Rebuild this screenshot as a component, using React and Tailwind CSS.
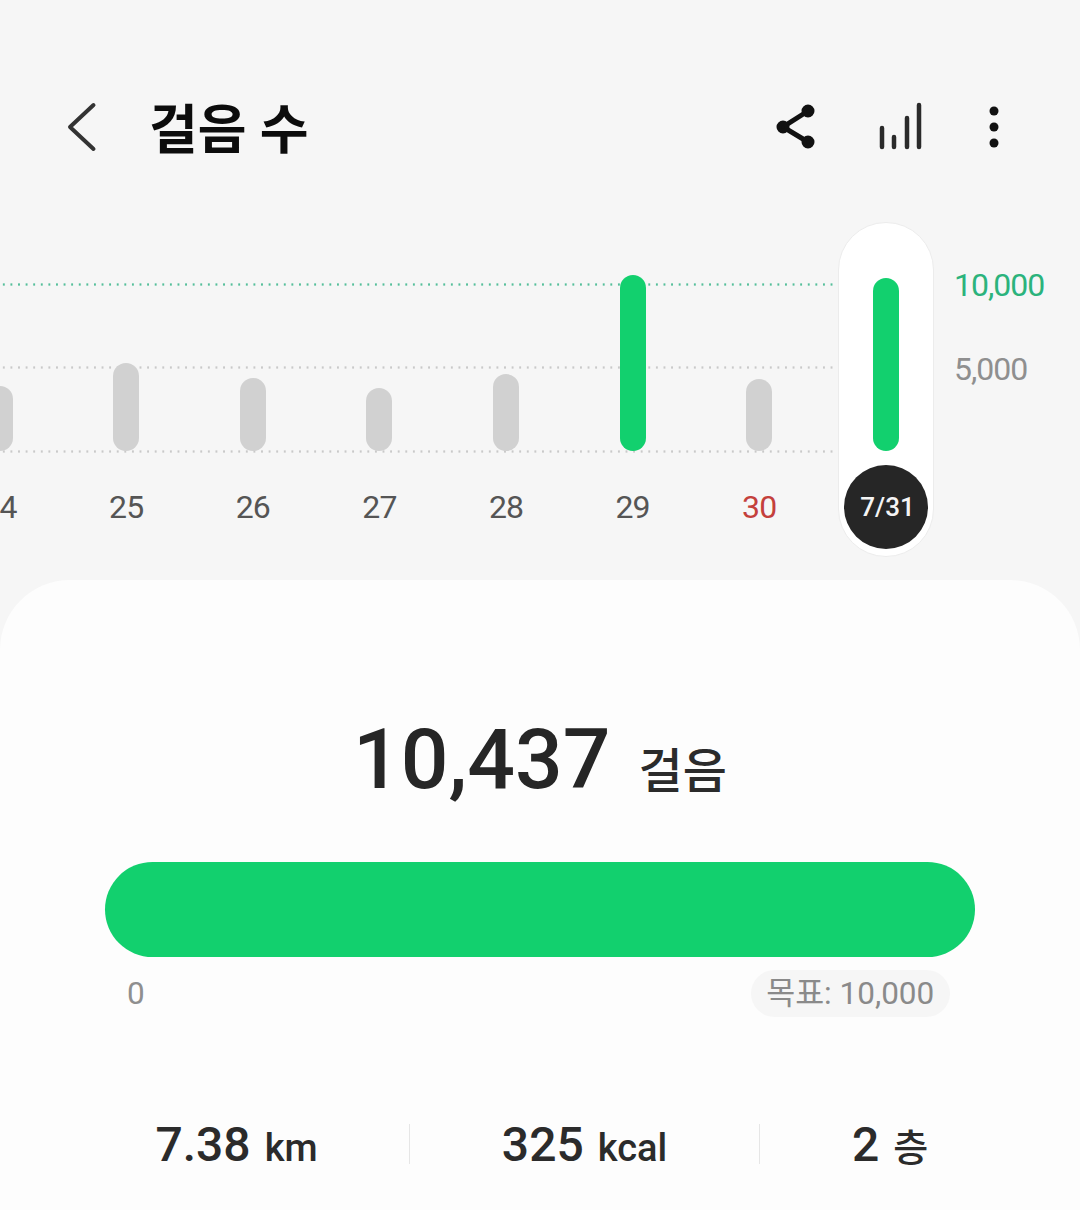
import React from 'react';

const days = [
  { label: '24', top: 386 },
  { label: '25', top: 363 },
  { label: '26', top: 378 },
  { label: '27', top: 388 },
  { label: '28', top: 374 },
  { label: '29', top: 275, green: true },
  { label: '30', top: 379, red: true },
];

const Header = () => (
  <div className="flex h-[54px] items-center">
    <svg className="ml-[64px] h-[54px] w-[36px]" viewBox="0 0 36 54" fill="none" stroke="#333" strokeWidth="4" strokeLinecap="round" strokeLinejoin="round">
      <path d="M29.5 5 6 27l23.5 22" />
    </svg>
    <h1 className="ml-[49px] mt-[8px] text-[53px] font-bold leading-[54px] text-[#0c0c0c]">걸음 수</h1>
    <svg className="ml-auto h-[54px] w-[48px]" viewBox="0 0 48 54" fill="#111" stroke="#111" strokeWidth="5">
      <path d="M36 11 11 27l25 15" fill="none" />
      <circle cx="11" cy="27" r="4" />
      <circle cx="36" cy="11" r="4" />
      <circle cx="36" cy="42" r="4" />
    </svg>
    <svg className="ml-[56px] h-[54px] w-[48px]" viewBox="0 0 48 54" fill="none" stroke="#2a2a2a" strokeWidth="4.5" strokeLinecap="round">
      <path d="M6 28v19M18 37v10M31 18v29M43 5v42" />
    </svg>
    <svg className="ml-[46px] mr-[62px] h-[54px] w-[48px]" viewBox="0 0 48 54" fill="#111">
      <circle cx="24" cy="11" r="4.5" />
      <circle cx="24" cy="27" r="4.5" />
      <circle cx="24" cy="43" r="4.5" />
    </svg>
  </div>
);

const Chart = () => (
  <div className="relative mt-[68px] h-[334px]">
    <div className="absolute left-0 top-[61px] h-[3px] w-[845px] bg-[radial-gradient(circle,#55bf9a_1px,transparent_1.3px)] bg-[length:7.6px_3px]" />
    <div className="absolute left-0 top-[144px] h-[3px] w-[845px] bg-[radial-gradient(circle,#c9c9c9_1px,transparent_1.3px)] bg-[length:7.6px_3px]" />
    <div className="absolute left-0 top-[228px] h-[3px] w-[845px] bg-[radial-gradient(circle,#c9c9c9_1px,transparent_1.3px)] bg-[length:7.6px_3px]" />

    <div className="relative -ml-[63.7px] flex">
      {days.map((d) => (
        <div key={d.label} className="flex w-[126.6px] shrink-0 flex-col items-center">
          <div className="flex h-[229px] flex-col justify-end">
            <div
              className={d.green ? 'w-[26px] rounded-full bg-[#12d06e]' : 'w-[26px] rounded-full bg-[#d1d1d1]'}
              style={{ height: 451 - d.top }}
            />
          </div>
          <span className={d.red ? 'mt-[36px] text-[32px] leading-[40px] tracking-[-0.9px] text-[#c4403c]' : 'mt-[36px] text-[32px] leading-[40px] tracking-[-0.9px] text-[#555]'}>
            {d.label}
          </span>
        </div>
      ))}

      {/* selected day */}
      <div className="ml-[15.5px] flex h-[335px] w-[96px] shrink-0 flex-col items-center rounded-full border border-[#ececec] bg-white">
        <div className="mt-[55px] h-[173px] w-[26px] rounded-full bg-[#12d06e]" />
        <div className="mt-[14px] flex h-[84px] w-[84px] items-center justify-center rounded-full bg-[#262626] pl-[3px] text-[26px] font-medium text-[#f4f4f4]">
          7/31
        </div>
      </div>

      <div className="ml-[20px] flex flex-col text-[32px] leading-[40px] tracking-[-1px]">
        <span className="mt-[43px] text-[#2bb37c]">10,000</span>
        <span className="mt-[44px] text-[#8f8f8f]">5,000</span>
      </div>
    </div>
  </div>
);

const Stat = ({ value, unit, className }) => (
  <div className={className}>
    <span className="text-[48px] font-medium leading-[60px] text-[#2b2b2b]">{value}</span>
    <span className="ml-[14px] text-[38px] font-medium leading-[60px] text-[#2b2b2b]">{unit}</span>
  </div>
);

export default function App() {
  return (
    <div className="h-[1210px] w-[1080px] overflow-hidden bg-[#f6f6f6] pt-[100px] font-['Roboto','Noto_Sans_CJK_KR',sans-serif]">
      <Header />
      <Chart />

      <div className="mt-[24px] h-[630px] rounded-t-[70px] bg-[#fdfdfd]">
        <div className="flex items-baseline justify-center pt-[130px]">
          <span className="text-[84px] font-medium leading-[100px] text-[#262626]">10,437</span>
          <span className="ml-[28px] text-[48px] font-medium leading-[100px] text-[#2b2b2b]">걸음</span>
        </div>

        <div className="mx-[105px] mt-[40px] h-[95px] rounded-full bg-[#12d06e]" />

        <div className="mt-[13px] flex items-center pl-[127px]">
          <span className="text-[31.5px] leading-[47px] text-[#8f8f8f]">0</span>
          <span className="ml-[606px] flex h-[47px] w-[199px] items-center justify-center rounded-full bg-[#f6f6f6] text-[31.5px] text-[#8a8a8a]">
            목표: 10,000
          </span>
        </div>

        <div className="mt-[98px] flex items-start">
          <Stat value="7.38" unit="km" className="flex w-[409px] items-baseline justify-center pl-[64px]" />
          <div className="mt-[9px] h-[40px] w-px bg-[#e6e6e6]" />
          <Stat value="325" unit="kcal" className="flex w-[349px] items-baseline justify-center" />
          <div className="mt-[9px] h-[40px] w-px bg-[#e6e6e6]" />
          <Stat value="2" unit="층" className="flex w-[260px] items-baseline justify-center" />
        </div>
      </div>
    </div>
  );
}
